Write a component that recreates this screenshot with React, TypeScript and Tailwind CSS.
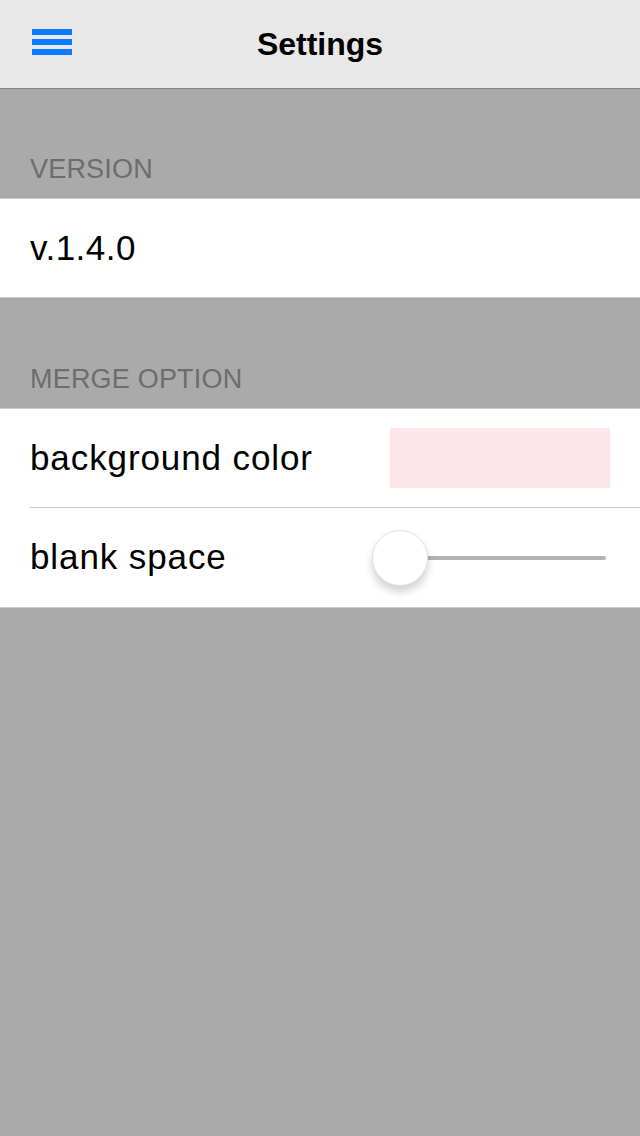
export default function App() {
  return (
    <div
      className="min-h-[1136px] w-[640px] bg-[#aaaaaa] text-black"
      style={{ fontFamily: '"Liberation Sans", Arial, sans-serif' }}
    >
      {/* Navigation bar */}
      <div className="relative flex h-[89px] items-center justify-center border-b border-[#858585] bg-[#e8e8e8]">
        <button className="absolute left-[32px] top-[29px] flex w-[40px] flex-col gap-[4px]">
          <span className="block h-[6px] w-full bg-[#0a7bff]"></span>
          <span className="block h-[6px] w-full bg-[#0a7bff]"></span>
          <span className="block h-[6px] w-full bg-[#0a7bff]"></span>
        </button>
        <h1 className="text-[32px] font-bold">Settings</h1>
      </div>

      {/* Version section */}
      <div className="flex h-[109px] items-end px-[30px] pb-[15px]">
        <p className="text-[27px] leading-[28px] tracking-[0.2px] text-[#6d6d6d]">VERSION</p>
      </div>
      <div className="border-y border-[#c8c7cc] bg-white">
        <div className="flex h-[98px] items-center px-[30px]">
          <span className="text-[35px] tracking-[0.5px]">v.1.4.0</span>
        </div>
      </div>

      {/* Merge option section */}
      <div className="flex h-[110px] items-end px-[30px] pb-[15px]">
        <p className="text-[27px] leading-[28px] tracking-[0.2px] text-[#6d6d6d]">MERGE OPTION</p>
      </div>
      <div className="border-y border-[#c8c7cc] bg-white">
        <div className="h-[99px] pl-[30px]">
          <div className="flex h-full items-center justify-between border-b border-[#c8c7cc] pr-[30px]">
            <span className="text-[35px] tracking-[0.9px]">background color</span>
            <div className="h-[60px] w-[220px] bg-[#fde6ea]"></div>
          </div>
        </div>
        <div className="flex h-[99px] items-center justify-between pl-[30px] pr-[34px]">
          <span className="text-[35px] tracking-[0.9px]">blank space</span>
          <div className="relative flex h-[56px] w-[234px] items-center">
            <div className="ml-[28px] h-[4px] flex-1 rounded-full bg-[#b3b3b3]"></div>
            <div className="absolute left-0 top-0 h-[56px] w-[56px] rounded-full border border-[#e2e2e2] bg-white shadow-[0_6px_8px_rgba(0,0,0,0.18)]"></div>
          </div>
        </div>
      </div>
    </div>
  );
}
